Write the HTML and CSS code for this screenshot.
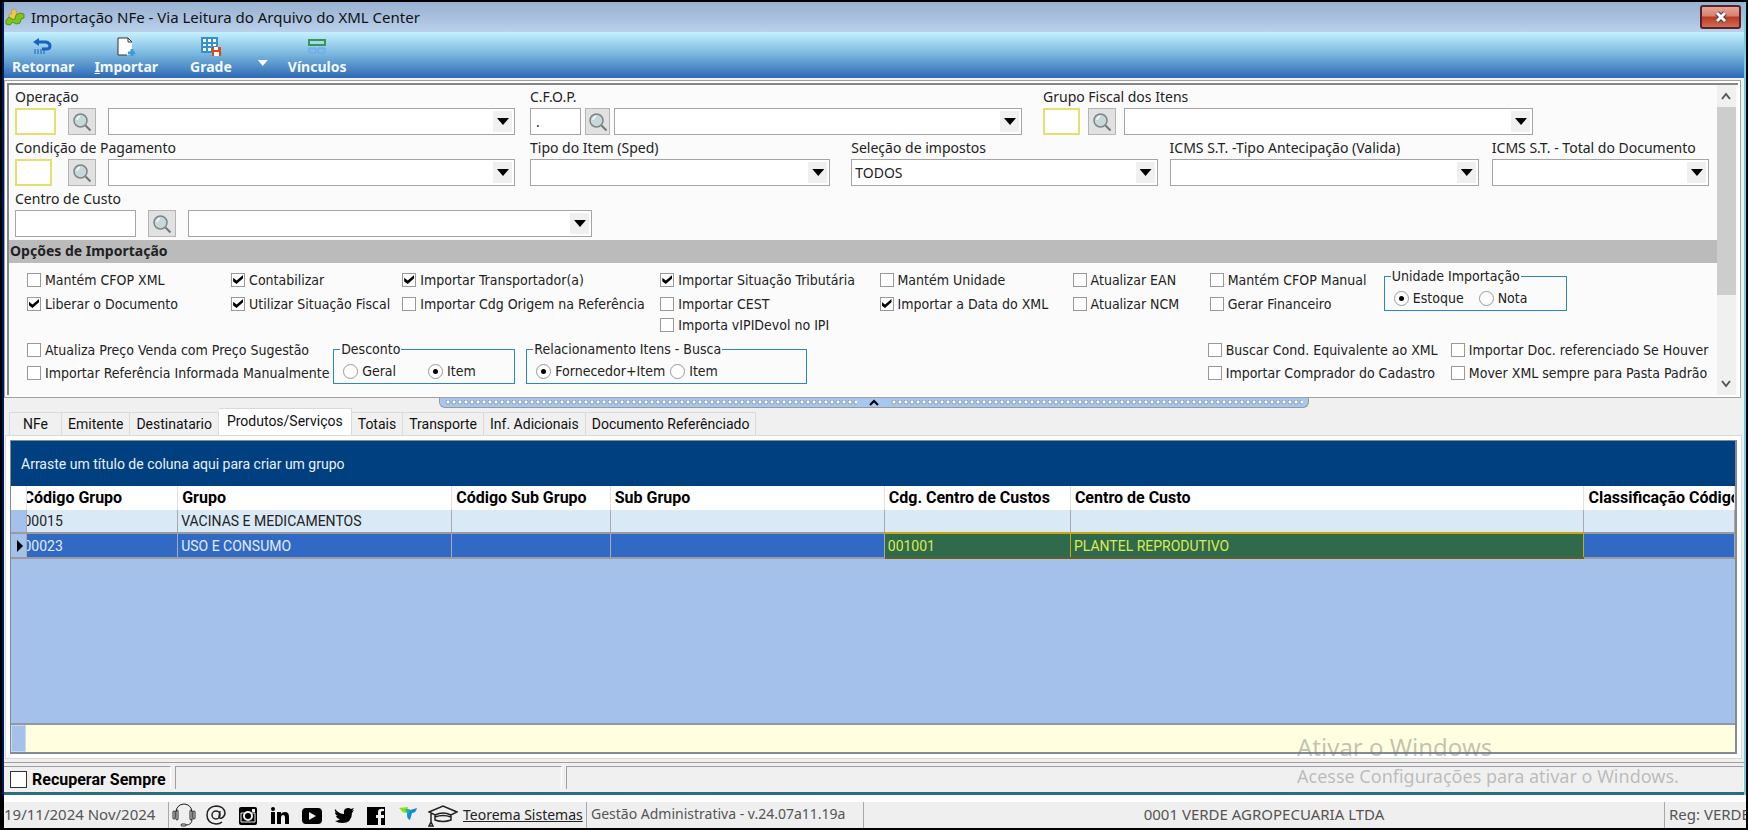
FILE: index.html
```html
<!DOCTYPE html>
<html lang="pt-BR">
    <head>
        <meta charset="UTF-8" />
        <meta name="viewport" content="width=device-width, initial-scale=1.0" />
        <title>Importação NFe</title>
        <link rel="stylesheet" href="styles.css">
    </head>
    <body>
        <svg class="defs" aria-hidden="true">
            <symbol id="lens" viewBox="0 0 20 20">
                <path d="M13.5 13.5L18.500 18.500" stroke="#6f7577" stroke-width="2" />
                <circle cx="8.500" cy="8.500" r="6.500" fill="#c6d8da" stroke="#7d8587" stroke-width="1.500" />
                <path d="M5 8a4 4 0 0 1 3-3.500" fill="none" stroke="#f4fafa" stroke-width="1.500" />
            </symbol>
        </svg>

        <div class="window">
            <div class="title">
                <svg width="20" height="20" viewBox="0 0 20 20">
                    <path d="M4 13V7h3q-1-2 0-4 2-2 4 0 1 2 0 4h4v6z" fill="#efc659" stroke="#cf9f3a" />
                    <path d="M1 13l3-3 3 2q1 1 3 0l1-4 4-2 4 1v4l-3 1-1 4-4 1-3-2-3 3-4-1z" fill="#7cc51f" stroke="#539411" />
                </svg>
                <span>Importação NFe - Via Leitura do Arquivo do XML Center</span>
                <button class="close" aria-label="Fechar">
                    <svg width="14" height="12" viewBox="0 0 14 12"><path d="M3 2l8 8M11 2l-8 8" stroke="#4b3b42" stroke-width="5" /><path d="M3 2l8 8M11 2l-8 8" stroke="#fff" stroke-width="3" /></svg>
                </button>
            </div>

            <div class="toolbar">
                <button class="tool">
                    <svg width="20" height="18" viewBox="0 0 20 18"><path d="M3 4h10q4 1 4 4t-4 3h-4" fill="none" stroke="#1763bd" stroke-width="3" /><path d="M0 4l6-4v8z" fill="#1763bd" /><path d="M2 11v5M5 11v5M8 11v5M11 11v5" stroke="#1763bd" stroke-width="1" /></svg>
                    Retornar
                </button>
                <button class="tool">
                    <svg width="20" height="20" viewBox="0 0 20 20"><path d="M2 1h10l4 4v13H2z" fill="#fff" /><path d="M2 18V1h10M2 18h9" fill="none" stroke="#333" /><path d="M12 1l4 4h-4z" fill="#fff" stroke="#333" /><path d="M16 12v7M12 16h7" stroke="#3f9ade" stroke-width="3" /></svg>
                    <span><u>I</u>mportar</span>
                </button>
                <button class="tool tool-grade">
                    <svg width="20" height="20" viewBox="0 0 20 20"><path d="M1 1h15v14H1z" fill="#fff" /><path d="M1 1h15v14H1zM1 6h15M1 10h15M6 1v14M11 1v14" fill="none" stroke="#3391d1" stroke-width="2" /><path d="M11 10h9v9h-9z" fill="#e0441a" /><path d="M13 10h4v3h-4zM13 15h5v4h-5z" fill="#fff" /></svg>
                    Grade
                </button>
                <button class="drop" aria-label="Mais opções"></button>
                <button class="tool">
                    <svg width="20" height="18" viewBox="0 0 20 18"><path d="M2 2h16v5H2z" fill="#a5dbe5" stroke="#37945a" stroke-width="2" /><path d="M2 10h7v5H2zM11 10h7v5h-7z" fill="#80b9ea" stroke="#68a9e3" /></svg>
                    Vínculos
                </button>
            </div>

            <div class="frame">
                <div class="filters">
                    <div class="form">
                        <div class="row">
                            <div class="field f-op">
                                <label for="operacao">Operação</label>
                                <div class="inputs">
                                    <input class="code required code-op" id="operacao" type="text">
                                    <button class="search" aria-label="Buscar operação"><svg width="20" height="20"><use href="#lens" /></svg></button>
                                    <div class="combo"><select aria-label="Operação"><option></option></select></div>
                                </div>
                            </div>
                            <div class="field f-cfop">
                                <label for="cfop">C.F.O.P.</label>
                                <div class="inputs tight">
                                    <input class="code code-cfop" id="cfop" type="text" value=".">
                                    <button class="search" aria-label="Buscar CFOP"><svg width="20" height="20"><use href="#lens" /></svg></button>
                                    <div class="combo"><select aria-label="C.F.O.P."><option></option></select></div>
                                </div>
                            </div>
                            <div class="field f-grupo">
                                <label for="grupo">Grupo Fiscal dos Itens</label>
                                <div class="inputs medium">
                                    <input class="code required" id="grupo" type="text">
                                    <button class="search" aria-label="Buscar grupo"><svg width="20" height="20"><use href="#lens" /></svg></button>
                                    <div class="combo"><select aria-label="Grupo Fiscal dos Itens"><option></option></select></div>
                                </div>
                            </div>
                        </div>

                        <div class="row">
                            <div class="field f-op">
                                <label for="condicao">Condição de Pagamento</label>
                                <div class="inputs cond">
                                    <input class="code required" id="condicao" type="text">
                                    <button class="search" aria-label="Buscar condição"><svg width="20" height="20"><use href="#lens" /></svg></button>
                                    <div class="combo"><select aria-label="Condição de Pagamento"><option></option></select></div>
                                </div>
                            </div>
                            <div class="field f-tipo">
                                <label for="tipo">Tipo do Item (Sped)</label>
                                <div class="combo"><select id="tipo"><option></option></select></div>
                            </div>
                            <div class="field f-imp">
                                <label for="impostos">Seleção de impostos</label>
                                <div class="combo"><select id="impostos"><option>TODOS</option></select></div>
                            </div>
                            <div class="field f-ant">
                                <label for="antecipacao">ICMS S.T. -Tipo Antecipação (Valida)</label>
                                <div class="combo"><select id="antecipacao"><option></option></select></div>
                            </div>
                            <div class="field f-total">
                                <label for="total">ICMS S.T. - Total do Documento</label>
                                <div class="combo"><select id="total"><option></option></select></div>
                            </div>
                        </div>

                        <div class="row">
                            <div class="field f-centro">
                                <label for="centro">Centro de Custo</label>
                                <div class="inputs">
                                    <input class="code code-centro" id="centro" type="text">
                                    <button class="search" aria-label="Buscar centro"><svg width="20" height="20"><use href="#lens" /></svg></button>
                                    <div class="combo"><select aria-label="Centro de Custo"><option></option></select></div>
                                </div>
                            </div>
                        </div>

                        <div class="section">Opções de Importação</div>

                        <div class="options">
                            <label class="check"><input type="checkbox">Mantém CFOP XML</label>
                            <label class="check"><input type="checkbox" checked>Contabilizar</label>
                            <label class="check"><input type="checkbox" checked>Importar Transportador(a)</label>
                            <label class="check"><input type="checkbox" checked>Importar Situação Tributária</label>
                            <label class="check"><input type="checkbox">Mantém Unidade</label>
                            <label class="check"><input type="checkbox">Atualizar EAN</label>
                            <label class="check"><input type="checkbox">Mantém CFOP Manual</label>
                            <fieldset class="unidade">
                                <legend>Unidade Importação</legend>
                                <label class="check"><input type="radio" name="unidade" checked>Estoque</label>
                                <label class="check"><input type="radio" name="unidade">Nota</label>
                            </fieldset>
                            <label class="check"><input type="checkbox" checked>Liberar o Documento</label>
                            <label class="check"><input type="checkbox" checked>Utilizar Situação Fiscal</label>
                            <label class="check"><input type="checkbox">Importar Cdg Origem na Referência</label>
                            <label class="check"><input type="checkbox">Importar CEST</label>
                            <label class="check"><input type="checkbox" checked>Importar a Data do XML</label>
                            <label class="check"><input type="checkbox">Atualizar NCM</label>
                            <label class="check"><input type="checkbox">Gerar Financeiro</label>
                            <label class="check ipi"><input type="checkbox">Importa vIPIDevol no IPI</label>
                        </div>

                        <div class="options more">
                            <div class="pair">
                                <label class="check"><input type="checkbox">Atualiza Preço Venda com Preço Sugestão</label>
                                <label class="check"><input type="checkbox">Importar Referência Informada Manualmente</label>
                            </div>
                            <fieldset class="desconto">
                                <legend>Desconto</legend>
                                <label class="check"><input type="radio" name="desconto">Geral</label>
                                <label class="check"><input type="radio" name="desconto" checked>Item</label>
                            </fieldset>
                            <fieldset class="busca">
                                <legend>Relacionamento Itens - Busca</legend>
                                <label class="check"><input type="radio" name="busca" checked>Fornecedor+Item</label>
                                <label class="check"><input type="radio" name="busca">Item</label>
                            </fieldset>
                            <div class="pair">
                                <label class="check"><input type="checkbox">Buscar Cond. Equivalente ao XML</label>
                                <label class="check"><input type="checkbox">Importar Comprador do Cadastro</label>
                            </div>
                            <div class="pair">
                                <label class="check"><input type="checkbox">Importar Doc. referenciado Se Houver</label>
                                <label class="check"><input type="checkbox">Mover XML sempre para Pasta Padrão</label>
                            </div>
                        </div>
                    </div>

                    <div class="scroll">
                        <svg width="19" height="22" viewBox="0 0 19 22"><path d="M5 14l4-5 4 5" fill="none" stroke="#555" stroke-width="2" /></svg>
                        <div class="thumb"></div>
                        <svg width="19" height="22" viewBox="0 0 19 22"><path d="M5 8l4 5 4-5" fill="none" stroke="#555" stroke-width="2" /></svg>
                    </div>
                </div>
            </div>

            <div class="splitter">
                <div class="dots"></div>
                <svg width="24" height="9" viewBox="0 0 24 9"><path d="M8 7l4-4 4 4" fill="none" stroke="#000" stroke-width="2" /></svg>
                <div class="dots"></div>
            </div>

            <div class="tabs">
                <button class="tab tab-first">NFe</button>
                <button class="tab">Emitente</button>
                <button class="tab">Destinatario</button>
                <button class="tab active">Produtos/Serviços</button>
                <button class="tab">Totais</button>
                <button class="tab">Transporte</button>
                <button class="tab">Inf. Adicionais</button>
                <button class="tab">Documento Referênciado</button>
            </div>

            <div class="page">
                <div class="grid">
                    <div class="group-by">Arraste um título de coluna aqui para criar um grupo</div>
                    <table>
                        <colgroup>
                            <col class="c-ind">
                            <col class="c-cod">
                            <col class="c-grupo">
                            <col class="c-csub">
                            <col class="c-sub">
                            <col class="c-ccc">
                            <col class="c-cc">
                            <col class="c-class">
                        </colgroup>
                        <thead>
                            <tr>
                                <th></th>
                                <th class="cut">Código Grupo</th>
                                <th>Grupo</th>
                                <th>Código Sub Grupo</th>
                                <th>Sub Grupo</th>
                                <th>Cdg. Centro de Custos</th>
                                <th>Centro de Custo</th>
                                <th>Classificação Código</th>
                            </tr>
                        </thead>
                        <tbody>
                            <tr>
                                <td class="ind"></td>
                                <td class="cut">00015</td>
                                <td>VACINAS E MEDICAMENTOS</td>
                                <td></td>
                                <td></td>
                                <td></td>
                                <td></td>
                                <td></td>
                            </tr>
                            <tr class="selected">
                                <td class="ind"><svg width="8" height="14" viewBox="0 0 8 14"><path d="M1 1l6 6-6 6z" /></svg></td>
                                <td class="cut">00023</td>
                                <td>USO E CONSUMO</td>
                                <td></td>
                                <td></td>
                                <td class="mark">001001</td>
                                <td class="mark">PLANTEL REPRODUTIVO</td>
                                <td></td>
                            </tr>
                        </tbody>
                    </table>
                    <div class="empty"></div>
                    <div class="summary"><div class="corner"></div></div>
                </div>
            </div>

            <div class="status">
                <div class="cell cell-check"><label><input type="checkbox">Recuperar Sempre</label></div>
                <div class="cell cell-mid"></div>
                <div class="cell cell-rest"></div>
            </div>

            <div class="watermark">
                <div class="big">Ativar o Windows</div>
                <div>Acesse Configurações para ativar o Windows.</div>
            </div>
        </div>

        <div class="bottom">
            <div class="part date">19/11/2024 Nov/2024</div>
            <div class="part social">
                <svg width="24" height="24" viewBox="0 0 24 24" fill="none" stroke="#222"><path d="M4 9a8 8 0 0 1 16 0M20 16q0 6-6 6" /><rect x="1" y="8" width="2" height="8" rx="1" /><rect x="4" y="7" width="2" height="10" rx="1" /><rect x="18" y="7" width="2" height="10" rx="1" /><rect x="21" y="8" width="2" height="8" rx="1" /><rect x="9" y="21" width="5" height="2" rx="1" /></svg>
                <svg width="24" height="24" viewBox="0 0 24 24" fill="none" stroke="#222" stroke-width="1.500"><circle cx="12" cy="12" r="4" /><path d="M16 8l-1 6q1 2 3 1 3-2 3-5-1-7-9-7-9 1-9 9t9 9q4 0 6-2" /></svg>
                <svg width="24" height="24" viewBox="0 0 24 24"><rect x="3" y="4" width="18" height="18" rx="2" /><path d="M5 10h4M15 10h4v9H5v-9" stroke="#efefef" stroke-width="1" fill="none" /><circle cx="12" cy="13" r="4" fill="none" stroke="#efefef" stroke-width="2" /><path d="M16 6h3v3h-3z" fill="#efefef" /></svg>
                <svg width="24" height="24" viewBox="0 0 24 24"><circle cx="5" cy="6" r="2" /><path d="M3 9h4v12H3zM9 9h4v2q1-2 4-2 4 0 4 5v7h-4v-6q0-3-2-3t-2 3v6H9z" /></svg>
                <svg width="24" height="24" viewBox="0 0 24 24"><rect x="2" y="5" width="20" height="16" rx="4" /><path d="M9 9l7 4-7 4z" fill="#efefef" /></svg>
                <svg width="24" height="24" viewBox="0 0 24 24"><path d="M3 6q4 5 9 5-1-6 4-6 2 0 3 1l3-1-2 3 2-1-2 3q0 10-10 10-4 0-7-2 3 0 5-2-3 0-4-3h2q-3-1-3-4l2 1q-3-2-2-4z" /></svg>
                <svg width="24" height="24" viewBox="0 0 24 24"><path d="M3 4h18v18h-4v-7h3v-3h-3V9q0-1 3-1V6q-6-1-6 3v3h-2v3h2v7H3z" /></svg>
                <svg width="24" height="24" viewBox="0 0 24 24"><path d="M3 5l9-1-1 6q-5 0-6-3z" fill="#8be01a" /><path d="M11 8l10-3q-1 5-5 5l-2 7q-3-1-3-5z" fill="#1688e0" /><path d="M9 6h5l-2 6z" fill="#15b9ac" /></svg>
                <svg width="30" height="24" viewBox="0 0 30 24" fill="none" stroke="#222" stroke-width="1.500"><path d="M1 9l14-6 14 6-6 3q-8-4-16 0zM7 12v5q8 3 16 0v-5M7 14q8-3 16 0M3 10v9l-2 4h4l-2-4" /></svg>
                <a href="#">Teorema Sistemas</a>
            </div>
            <div class="part version">Gestão Administrativa - v.24.07a11.19a</div>
            <div class="part company">0001 VERDE AGROPECUARIA LTDA</div>
            <div class="part reg">Reg: VERDE</div>
        </div>
    </body>
</html>
```

FILE: styles.css
```css
* {
    box-sizing: border-box;
}

body {
    margin: 0;
    padding: 2px 2px;
    min-height: 100vh;
    display: flex;
    flex-direction: column;
    background: #000;
    color: #222;
    font-family: "Noto Sans", "Open Sans", sans-serif;
    font-size: 14px;
    overflow: hidden;
}

button,
input,
select {
    font: inherit;
    color: inherit;
    margin: 0;
}

.defs {
    position: absolute;
    width: 0;
    height: 0;
}

.window {
    position: relative;
    flex: 1;
    display: flex;
    flex-direction: column;
    background: #f0f0f0;
    border-left: 2px solid #001a57;
    border-right: 2px solid #72cde2;
}

/* title bar */
.title {
    height: 30px;
    padding: 0 3px 0 1px;
    display: flex;
    align-items: center;
    gap: 6px;
    background: linear-gradient(#97b1cf, #a8c0dd 50%, #b9d1ea);
    font-size: 15px;
    color: #111;
}

.close {
    width: 41px;
    height: 24px;
    margin-left: auto;
    padding: 0;
    display: flex;
    align-items: center;
    justify-content: center;
    border: 2px solid #56222b;
    border-radius: 3px;
    background: linear-gradient(#e6a596, #d9806f 45%, #bb3a20 50%, #d16b57);
}

/* toolbar */
.toolbar {
    height: 46px;
    padding: 4px 8px 0;
    display: flex;
    align-items: flex-start;
    gap: 20px;
    background: linear-gradient(#c4f1fe, #7fbbe0 45%, #2d69b6);
}

.tool {
    padding: 0;
    border: 0;
    background: none;
    color: #f4f9ff;
    font-size: 14px;
    line-height: 18px;
    font-weight: bold;
    display: flex;
    flex-direction: column;
    align-items: center;
}

.tool svg {
    height: 22px;
}

.tool-grade {
    margin-left: 12px;
}

.drop {
    width: 10px;
    height: 6px;
    margin: 24px 0 0 6px;
    padding: 0;
    border: 0;
    background: #fff;
    clip-path: polygon(0 0, 100% 0, 50% 100%);
}

/* filter panel */
.frame {
    margin-top: 2px;
    margin-right: 3px;
    padding: 2px;
    background: #fff;
    border: 1px solid #a0a0a0;
}

.filters {
    display: flex;
    border-top: 2px solid #868686;
    border-left: 2px solid #868686;
    background: #fbfbfb;
}

.form {
    flex: 1;
    min-width: 0;
}

.row {
    display: flex;
    height: 51px;
    padding: 0 8px 0 6px;
}

.field {
    min-width: 0;
}

.field > label {
    display: block;
    height: 23px;
    line-height: 23px;
    white-space: nowrap;
}

.f-op,
.f-cfop,
.f-grupo,
.f-centro {
    flex: 0 1 500px;
}

.f-cfop,
.f-tipo {
    margin-left: 15px;
}

.f-cfop {
    flex-basis: 492px;
}

.f-grupo {
    flex-basis: 490px;
    margin-left: 21px;
}

.f-tipo {
    flex: 300 1 0;
}

.f-imp {
    flex: 306 1 0;
    margin-left: 21px;
}

.f-ant {
    flex: 309 1 0;
    margin-left: 12px;
}

.f-total {
    flex: 217 1 0;
    margin-left: 13px;
}

.f-centro {
    flex-basis: 577px;
}

.inputs {
    display: flex;
    gap: 12px;
}

.inputs.tight {
    gap: 4px;
}

.inputs.medium {
    gap: 8px;
}

.code {
    width: 37px;
    height: 27px;
    padding: 0 5px;
    border: 1px solid #a5a5a5;
    background: #fff;
}

.code.required {
    border: 2px solid #e3e070;
}

.code-op {
    width: 41px;
}

.cond .code {
    margin-right: 4px;
}

.code-cfop {
    width: 51px;
}

.code-centro {
    width: 121px;
}

.search {
    width: 28px;
    height: 27px;
    padding: 0;
    display: flex;
    align-items: center;
    justify-content: center;
    border: 1px solid #b4b4b4;
    background: #e1e1e1;
}

.tight .search {
    width: 25px;
}

.combo {
    position: relative;
    flex: 1;
    min-width: 0;
    height: 27px;
}

.combo select {
    appearance: none;
    width: 100%;
    height: 100%;
    padding: 0 3px;
    border: 1px solid #a5a5a5;
    border-radius: 0;
    background: #fff;
}

.combo::before {
    content: "";
    position: absolute;
    top: 3px;
    right: 3px;
    width: 19px;
    height: 21px;
    background: #f0f0f0;
    pointer-events: none;
}

.combo::after {
    content: "";
    position: absolute;
    top: 10px;
    right: 6px;
    width: 12px;
    height: 7px;
    background: #000;
    clip-path: polygon(0 0, 100% 0, 50% 100%);
    pointer-events: none;
}

.section {
    height: 23px;
    margin-top: 2px;
    padding-left: 1px;
    background: #bbb;
    line-height: 21px;
    font-weight: bold;
}

/* options */
.options {
    display: grid;
    grid-template-columns: 204fr 171fr 258fr 219fr 193fr 137fr 174fr 333fr;
    grid-template-rows: 24px 24px 18px;
    padding: 5px 0 0 18px;
    font-family: "DejaVu Sans Condensed", "DejaVu Sans", sans-serif;
    font-size: 14px;
}

.options.more {
    grid-template-columns: 306fr 193fr 681fr 243fr 266fr;
    grid-template-rows: 46px;
    padding: 4px 0 11px 18px;
}

.check {
    display: flex;
    align-items: center;
    gap: 4px;
    min-width: 0;
    white-space: nowrap;
}

.pair .check {
    height: 23px;
}

.ipi {
    grid-column: 4;
}

.check input {
    appearance: none;
    flex: none;
    width: 14px;
    height: 14px;
    border: 1px solid #999;
    background: #fff;
}

.check input[type="radio"] {
    width: 15px;
    height: 15px;
    border-radius: 50%;
}

.check input[type="checkbox"]:checked::after {
    content: "";
    display: block;
    width: 10px;
    height: 9px;
    margin: 1px;
    background: #000;
    clip-path: polygon(0 30%, 35% 60%, 100% 0, 100% 35%, 35% 100%, 0 72%);
}

.check input[type="radio"]:checked::after {
    content: "";
    display: block;
    width: 5px;
    height: 5px;
    margin: 4px;
    border-radius: 50%;
    background: #000;
}

fieldset {
    height: 43px;
    min-width: 0;
    margin: 0;
    padding: 3px 0 0 9px;
    border: 1px solid #2c86c4;
    display: flex;
    align-items: flex-start;
    gap: 15px;
}

fieldset legend {
    height: 16px;
    line-height: 16px;
    margin-left: -3px;
    padding: 0 1px;
}

fieldset .check {
    height: 22px;
}

.unidade {
    grid-row: 1 / 3;
    grid-column: 8;
    width: 183px;
}

.desconto,
.busca {
    align-self: end;
    width: 182px;
    gap: 32px;
}

.busca {
    width: 281px;
    gap: 5px;
}

.scroll {
    width: 19px;
    margin-right: 2px;
    display: flex;
    flex-direction: column;
    background: #f0f0f0;
}

.thumb {
    height: 188px;
    margin-bottom: auto;
    background: #cdcdcd;
}

/* splitter */
.splitter {
    width: 50%;
    height: 10px;
    margin: 0 auto;
    display: flex;
    background: #a6c8f0;
    border: 1px solid #999;
    border-top: 0;
    border-radius: 0 0 6px 6px;
}

.splitter .dots {
    flex: 1;
    margin: 2px 5px;
    background: radial-gradient(circle at 3px 2px, #fff 1px, #8e9db3 2px, #a6c8f0 3px) 0 0 / 6px 5px;
}

/* tabs */
.tabs {
    height: 27px;
    padding-left: 5px;
    display: flex;
    align-items: flex-end;
    font-family: Roboto, sans-serif;
}

.tab {
    height: 23px;
    padding: 0 6px;
    border: 1px solid #dadada;
    border-bottom: 0;
    border-left: 0;
    background: #f0f0f0;
    color: #111;
    white-space: nowrap;
}

.tab-first {
    padding: 0 13px;
    border-left: 1px solid #dadada;
}

.tab.active {
    height: 27px;
    padding: 0 8px 3px;
    background: #fff;
}

.page {
    flex: 1;
    margin: 0 2px 3px 1px;
    padding: 4px;
    display: flex;
    background: #fff;
    border: 1px solid #dadada;
}

.grid {
    flex: 1;
    min-width: 0;
    display: flex;
    flex-direction: column;
    border: 2px solid #838b98;
    border-width: 1px 2px 2px 1px;
    background: #a3c1ea;
    font-family: Roboto, sans-serif;
}

.group-by {
    height: 45px;
    padding-left: 10px;
    line-height: 46px;
    background: #004080;
    color: #e8f0f8;
}

table {
    width: 100%;
    table-layout: fixed;
    border-collapse: collapse;
}

.c-ind { width: 15px; }
.c-cod { width: 8.8%; }
.c-grupo { width: 15.9%; }
.c-csub { width: 9.2%; }
.c-sub { width: 15.9%; }
.c-ccc { width: 10.8%; }
.c-cc { width: 29.8%; }

th,
td {
    height: 24px;
    padding: 0 0 0 3px;
    text-align: left;
    white-space: nowrap;
    overflow: hidden;
    border-right: 1px solid #a9a9b4;
}

th {
    padding-left: 4px;
    background: #fff;
    color: #000;
    font-size: 16px;
    line-height: 22px;
    border-color: #e0e0e8;
}

td {
    height: 23px;
    background: #d9e9f5;
}

th.cut,
td.cut {
    padding-left: 0;
    text-indent: -4px;
}

.selected td {
    height: 25px;
    background: #316ac5;
    color: #e4ecf8;
    border-top: 2px solid #9b9a9c;
    border-bottom: 2px solid #9b9a9c;
}

td.ind,
.selected td.ind {
    padding: 0 0 0 5px;
    background: #a3c1ea;
}

.ind svg {
    display: block;
}

.selected td.mark {
    background: #2f6a4c;
    color: #dcec4c;
    border-color: #c9a90e;
    border-bottom-color: #66601c;
}

.empty {
    flex: 1;
}

.summary {
    height: 29px;
    display: flex;
    border-top: 2px solid #9099a6;
    background: #ffffdf;
}

.corner {
    width: 15px;
    background: #a3c1ea;
    border: 1px solid #c8d8ee;
}

/* inner status bar */
.status {
    height: 33px;
    padding: 3px 0 3px;
    display: flex;
    gap: 4px;
    border-top: 1px solid #a0a0a0;
    border-bottom: 3px solid #2e6d7d;
}

.cell {
    border-top: 1px solid #a0a0a0;
    border-left: 1px solid #a0a0a0;
    border-right: 1px solid #fff;
}

.cell-check {
    width: 167px;
    padding-left: 6px;
    border-left: 0;
}

.cell-check label {
    height: 24px;
    display: flex;
    align-items: center;
    gap: 5px;
    font-family: Roboto, sans-serif;
    font-size: 16px;
    font-weight: bold;
    color: #000;
    white-space: nowrap;
}

.cell-check input {
    appearance: none;
    flex: none;
    width: 17px;
    height: 17px;
    border: 1px solid #333;
    background: #fff;
}

.cell-mid {
    width: 387px;
}

.cell-rest {
    flex: 1;
}

.watermark {
    position: absolute;
    right: 61px;
    bottom: 6px;
    width: 386px;
    font-size: 18px;
    line-height: 26px;
    white-space: nowrap;
    color: rgba(120, 120, 120, 0.45);
    pointer-events: none;
}

.watermark .big {
    font-size: 24px;
    line-height: 32px;
}

/* bottom bar */
.bottom {
    display: flex;
    height: 33px;
    margin-left: 2px;
    padding-top: 7px;
    background: #fff;
    font-size: 15px;
    color: #555;
    overflow: hidden;
}

.part {
    padding: 0 4px;
    background: #efefef;
    border-right: 1px solid #a8a8a8;
    line-height: 24px;
    white-space: nowrap;
}

.date {
    width: 165px;
    padding: 0;
}

.social {
    width: 418px;
    padding-left: 3px;
    display: flex;
    align-items: center;
    gap: 8px;
}

.social svg {
    flex: none;
}

.social a {
    margin-left: -3px;
    color: #222;
    font-size: 14px;
}

.version {
    width: 277px;
    font-size: 14px;
}

.company {
    flex: 1;
    text-align: center;
}

.reg {
    width: 81px;
    border-right: 0;
    overflow: hidden;
}
```
